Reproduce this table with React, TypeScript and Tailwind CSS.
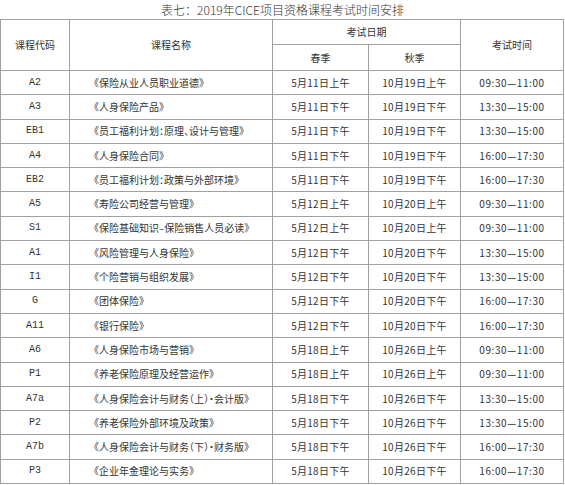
const rows = [
  ['A2', '《保险从业人员职业道德》', '5月11日上午', '10月19日上午', '09:30—11:00'],
  ['A3', '《人身保险产品》', '5月11日下午', '10月19日下午', '13:30—15:00'],
  ['EB1', '《员工福利计划：原理、设计与管理》', '5月11日下午', '10月19日下午', '13:30—15:00'],
  ['A4', '《人身保险合同》', '5月11日下午', '10月19日下午', '16:00—17:30'],
  ['EB2', '《员工福利计划：政策与外部环境》', '5月11日下午', '10月19日下午', '16:00—17:30'],
  ['A5', '《寿险公司经营与管理》', '5月12日上午', '10月20日上午', '09:30—11:00'],
  ['S1', '《保险基础知识–保险销售人员必读》', '5月12日上午', '10月20日上午', '09:30—11:00'],
  ['A1', '《风险管理与人身保险》', '5月12日下午', '10月20日下午', '13:30—15:00'],
  ['I1', '《个险营销与组织发展》', '5月12日下午', '10月20日下午', '13:30—15:00'],
  ['G', '《团体保险》', '5月12日下午', '10月20日下午', '16:00—17:30'],
  ['A11', '《银行保险》', '5月12日下午', '10月20日下午', '16:00—17:30'],
  ['A6', '《人身保险市场与营销》', '5月18日上午', '10月26日上午', '09:30—11:00'],
  ['P1', '《养老保险原理及经营运作》', '5月18日上午', '10月26日上午', '09:30—11:00'],
  ['A7a', '《人身保险会计与财务（上）·会计版》', '5月18日下午', '10月26日下午', '13:30—15:00'],
  ['P2', '《养老保险外部环境及政策》', '5月18日下午', '10月26日下午', '13:30—15:00'],
  ['A7b', '《人身保险会计与财务（下）·财务版》', '5月18日下午', '10月26日下午', '16:00—17:30'],
  ['P3', '《企业年金理论与实务》', '5月18日下午', '10月26日下午', '16:00—17:30'],
]

const cell = 'border border-[#a0a0a0] p-0 whitespace-nowrap overflow-hidden'

export default function App() {
  return (
    <div className="w-[565px] h-[485px] bg-white text-[#333] overflow-hidden font-['Noto_Sans_CJK_SC',sans-serif]">
      <div className="h-[19px] flex items-center justify-center text-[12px] leading-none font-light">
        表七：2019年CICE项目资格课程考试时间安排
      </div>
      <table className="w-[563px] border-collapse table-fixed text-[10px] leading-none">
        <colgroup>
          <col className="w-[69px]" />
          <col className="w-[203px]" />
          <col className="w-[96px]" />
          <col className="w-[92px]" />
          <col className="w-[103px]" />
        </colgroup>
        <thead>
          <tr>
            <th rowSpan={2} className={`${cell} font-normal text-center`}>课程代码</th>
            <th rowSpan={2} className={`${cell} font-normal text-center`}>课程名称</th>
            <th colSpan={2} className={`${cell} h-[25px] font-normal text-center`}>考试日期</th>
            <th rowSpan={2} className={`${cell} font-normal text-center`}>考试时间</th>
          </tr>
          <tr>
            <th className={`${cell} h-[26px] font-normal text-center`}>春季</th>
            <th className={`${cell} h-[26px] font-normal text-center`}>秋季</th>
          </tr>
        </thead>
        <tbody>
          {rows.map(([code, name, spring, autumn, time]) => (
            <tr key={code}>
              <td className={`${cell} h-[24.3px] text-center font-['Liberation_Mono','Noto_Sans_CJK_SC',monospace] text-[10px]`}>{code}</td>
              <td className={`${cell} pl-[24px] [font-feature-settings:'halt']`}>{name}</td>
              <td className={`${cell} text-center tracking-[0.3px]`}>{spring}</td>
              <td className={`${cell} text-center tracking-[0.3px]`}>{autumn}</td>
              <td className={`${cell} text-center tracking-[0.6px]`}>{time}</td>
            </tr>
          ))}
        </tbody>
      </table>
    </div>
  )
}
